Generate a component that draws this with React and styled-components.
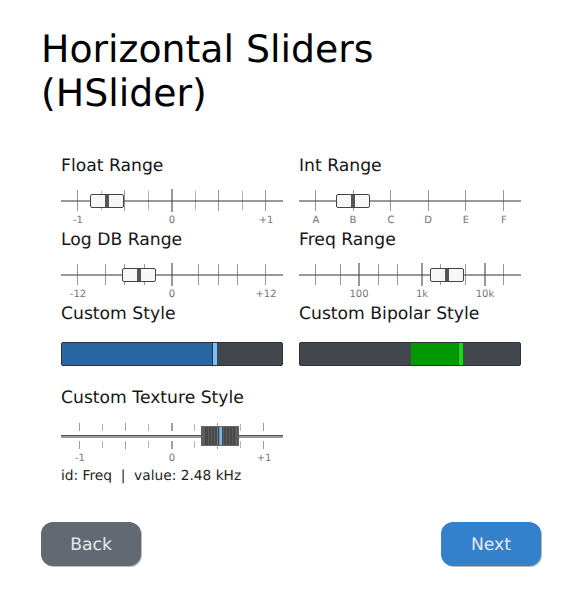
import React from "react";
import styled, { createGlobalStyle } from "styled-components";

const GlobalStyle = createGlobalStyle`
  * { box-sizing: border-box; }
  body {
    margin: 0;
    background: #fff;
    color: #000;
    font-family: "DejaVu Sans", sans-serif;
    text-rendering: geometricPrecision;
  }
`;

const Page = styled.main`
  display: flex;
  flex-direction: column;
  width: 582px;
  height: 593px;
  padding: 27px 41px 0;
  overflow: hidden;
`;

const Title = styled.h1`
  margin: 0 0 39px;
  width: 400px;
  font-size: 37.8px;
  font-weight: 400;
  line-height: 44px;
`;

const Sliders = styled.section`
  display: grid;
  grid-template-columns: 222px 222px;
  grid-template-rows: 74px 74px 84px 80px;
  column-gap: 16px;
  padding-left: 20px;
`;

const Cell = styled.div`
  display: flex;
  flex-direction: column;
`;

const Heading = styled.h2`
  margin: 0 0 6px;
  height: 24px;
  font-size: 17.2px;
  font-weight: 400;
  line-height: 24px;
  white-space: nowrap;
  color: #161616;
`;

const Scale = styled.svg`
  display: block;
  width: 222px;
  height: 40px;
  flex: none;
  overflow: visible;
  shape-rendering: crispEdges;
`;

const MarkLabel = styled.text`
  font-family: "DejaVu Sans", sans-serif;
  font-size: 10px;
  fill: #757575;
  text-anchor: middle;
`;

const BarTrack = styled.div`
  display: flex;
  height: 24px;
  margin-top: 10px;
  padding-left: ${(p) => p.$lead}px;
  background: #42464d;
  border: 1px solid #2e303a;
  border-radius: 2px;
`;

const BarFill = styled.div`
  width: ${(p) => p.$width}px;
  background: ${(p) => p.$color};
  border-right: 1px solid ${(p) => p.$edge};
`;

const BarHandle = styled.div`
  width: 4px;
  background: ${(p) => p.$color};
`;

const Output = styled.p`
  margin: 0;
  height: 20px;
  padding-left: 20px;
  font-size: 13.75px;
  line-height: 20px;
  white-space: pre;
  color: #222;
`;

const Nav = styled.nav`
  display: flex;
  justify-content: space-between;
  margin-top: 36px;
`;

const NavButton = styled.button`
  width: 100px;
  height: 44px;
  padding: 2px 0 0;
  border: 0;
  border-radius: 12px;
  background: ${(p) => p.$color};
  box-shadow: 1px 1px 0 #b9b9b9;
  color: #e8e8ea;
  font: 17.2px/42px "DejaVu Sans", sans-serif;
  text-rendering: geometricPrecision;
`;

const TICK = {
  major: { width: 2, top: 5, height: 23, color: "#989898" },
  mid: { width: 1, top: 6, height: 21, color: "#989898" },
  minor: { width: 1, top: 7, height: 19, color: "#b2b2b2" },
};

function Labels({ items, y }) {
  return items.map(([x, text]) => (
    <MarkLabel key={text} x={x} y={y}>{text}</MarkLabel>
  ));
}

function RangeSlider({ title, ticks, labels, handle }) {
  return (
    <Cell>
      <Heading>{title}</Heading>
      <Scale viewBox="0 0 222 40">
        <rect x="0" y="16" width="222" height="2" fill="#999" />
        {ticks.map(([x, kind]) => {
          const t = TICK[kind];
          return <rect key={x} x={x} y={t.top} width={t.width} height={t.height} fill={t.color} />;
        })}
        {ticks.map(([x, kind]) => (
          <rect key={x} x={x} y="16" width={TICK[kind].width} height="2" fill="#6b6b6b" />
        ))}
        <rect x={handle + 0.5} y="10.5" width="33" height="13" rx="1.5" fill="#f7f7f7" stroke="#444" shapeRendering="auto" />
        <rect x={handle + 15} y="11" width="4" height="12" fill="#555" />
        <Labels items={labels} y={38.5} />
      </Scale>
    </Cell>
  );
}

const GROOVES = [7, 10, 13, 16, 22, 25, 28, 31];

function TextureSlider() {
  const ticks = [18, 41, 64, 87, 110, 133, 156, 179, 202];
  return (
    <Cell>
      <Heading>Custom Texture Style</Heading>
      <Scale viewBox="0 0 222 40">
        {ticks.map((x, i) => {
          const short = i % 2;
          const w = x === 110 ? 2 : 1;
          const h = short ? 7 : 8;
          return (
            <g key={x} fill={short ? "#b2b2b2" : "#a0a0a0"}>
              <rect x={x} y={short ? 8 : 7} width={w} height={h} />
              <rect x={x} y="25" width={w} height={h} />
            </g>
          );
        })}
        <rect x="0" y="19" width="222" height="1" fill="#555" />
        <rect x="0" y="20" width="222" height="2" fill="#999" />
        <g transform="translate(140 10)">
          <rect width="38" height="20" rx="1" fill="#494949" />
          <rect width="4" height="20" fill="#5e5e5e" />
          <rect x="34" width="4" height="20" fill="#5e5e5e" />
          {GROOVES.map((x) => (
            <rect key={x} x={x} y="0" width="1" height="20" fill="#5b5b5b" />
          ))}
          <rect width="38" height="1" fill="#686868" />
          <rect y="19" width="38" height="1" fill="#666" />
          <rect x="16" width="1" height="20" fill="#747474" />
          <rect x="18" y="1" width="1" height="18" fill="#5f8db5" />
          <rect x="19" y="1" width="2" height="18" fill="#75b8f2" />
        </g>
        <Labels items={[[19, "-1"], [111, "0"], [203, "+1"]]} y={44.5} />
      </Scale>
    </Cell>
  );
}

function BarSlider({ title, lead, width, color, edge, handleColor }) {
  return (
    <Cell>
      <Heading>{title}</Heading>
      <BarTrack $lead={lead}>
        <BarFill $width={width} $color={color} $edge={edge} />
        <BarHandle $color={handleColor} />
      </BarTrack>
    </Cell>
  );
}

export default function App() {
  return (
    <Page>
      <GlobalStyle />
      <Title>Horizontal Sliders (HSlider)</Title>
      <Sliders>
        <RangeSlider
          title="Float Range"
          ticks={[[16, "mid"], [40, "minor"], [63, "mid"], [87, "minor"], [110, "major"], [134, "minor"], [157, "mid"], [181, "minor"], [204, "mid"]]}
          labels={[[17, "-1"], [111, "0"], [205, "+1"]]}
          handle={29}
        />
        <RangeSlider
          title="Int Range"
          ticks={[[16, "mid"], [54, "mid"], [91, "mid"], [129, "mid"], [166, "mid"], [204, "mid"]]}
          labels={[[17, "A"], [54, "B"], [92, "C"], [129, "D"], [167, "E"], [205, "F"]]}
          handle={37}
        />
        <RangeSlider
          title="Log DB Range"
          ticks={[[16, "mid"], [44, "mid"], [63, "mid"], [83, "mid"], [110, "major"], [137, "mid"], [157, "mid"], [176, "mid"], [204, "mid"]]}
          labels={[[17, "-12"], [111, "0"], [205, "+12"]]}
          handle={61}
        />
        <RangeSlider
          title="Freq Range"
          ticks={[[16, "mid"], [41, "mid"], [59, "major"], [79, "mid"], [98, "mid"], [122, "major"], [141, "mid"], [166, "mid"], [185, "major"], [204, "mid"]]}
          labels={[[60, "100"], [123, "1k"], [186, "10k"]]}
          handle={131}
        />
        <BarSlider title="Custom Style" lead={0} width={151} color="#2866a3" edge="#2e303a" handleColor="#75c2ff" />
        <BarSlider title="Custom Bipolar Style" lead={111} width={48} color="#009900" edge="#4d5a55" handleColor="#00e600" />
        <TextureSlider />
      </Sliders>
      <Output>{"id: Freq  |  value: 2.48 kHz"}</Output>
      <Nav>
        <NavButton $color="#636973">Back</NavButton>
        <NavButton $color="#3380cb">Next</NavButton>
      </Nav>
    </Page>
  );
}
